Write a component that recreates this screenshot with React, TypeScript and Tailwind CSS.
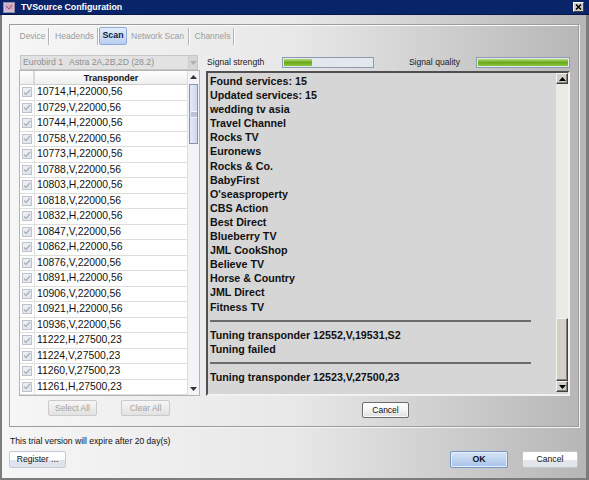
import React from 'react';

const transponders = [
  '10714,H,22000,56',
  '10729,V,22000,56',
  '10744,H,22000,56',
  '10758,V,22000,56',
  '10773,H,22000,56',
  '10788,V,22000,56',
  '10803,H,22000,56',
  '10818,V,22000,56',
  '10832,H,22000,56',
  '10847,V,22000,56',
  '10862,H,22000,56',
  '10876,V,22000,56',
  '10891,H,22000,56',
  '10906,V,22000,56',
  '10921,H,22000,56',
  '10936,V,22000,56',
  '11222,H,27500,23',
  '11224,V,27500,23',
  '11260,V,27500,23',
  '11261,H,27500,23',
];

type LogLine = { text?: string; rule?: boolean };

const log: LogLine[] = [
  { text: 'Found services: 15' },
  { text: 'Updated services: 15' },
  { text: 'wedding tv asia' },
  { text: 'Travel Channel' },
  { text: 'Rocks TV' },
  { text: 'Euronews' },
  { text: 'Rocks & Co.' },
  { text: 'BabyFirst' },
  { text: "O'seasproperty" },
  { text: 'CBS Action' },
  { text: 'Best Direct' },
  { text: 'Blueberry TV' },
  { text: 'JML CookShop' },
  { text: 'Believe TV' },
  { text: 'Horse & Country' },
  { text: 'JML Direct' },
  { text: 'Fitness TV' },
  { rule: true },
  { text: 'Tuning transponder 12552,V,19531,S2' },
  { text: 'Tuning failed' },
  { rule: true },
  { text: 'Tuning transponder 12523,V,27500,23' },
];

const tabs = [
  { label: 'Device', width: 'w-[31px]' },
  { label: 'Headends', width: 'w-[45px]' },
  { label: 'Scan', width: 'w-[28px]', active: true },
  { label: 'Network Scan', width: 'w-[61px]' },
  { label: 'Channels', width: 'w-[41px]' },
];

const Arrow: React.FC<{ down?: boolean; color?: string }> = ({ down, color = '#000' }) => (
  <svg width="7" height="4" viewBox="0 0 7 4">
    <path d={down ? 'M0 0 L7 0 L3.5 4Z' : 'M0 4 L3.5 0 L7 4Z'} fill={color} />
  </svg>
);

const CheckBox: React.FC = () => (
  <div className="w-[10px] h-[10px] border border-[#bcc3cd] bg-gradient-to-br from-[#f0f2f5] to-[#e0e4ea] flex items-center justify-center">
    <svg width="8" height="7" viewBox="0 0 8 7">
      <path d="M1 3.5 L3 5.5 L7 1" stroke="#a9b1bc" strokeWidth="1.3" fill="none" />
    </svg>
  </div>
);

const SignalBar: React.FC<{ width: string; fill: number }> = ({ width, fill }) => (
  <div className={`${width} h-[11px] border border-[#8d9bb0] bg-[#e3e8ef] p-[1px]`}>
    <div
      className="h-full bg-gradient-to-b from-[#b4e070] via-[#6aa81c] to-[#8cc83c]"
      style={{ width: `${fill}%` }}
    />
  </div>
);

const ClassicScrollButton: React.FC<{ down?: boolean }> = ({ down }) => (
  <div className="h-[11px] bg-[#d4d0c8] border border-t-[#f4f4f4] border-l-[#f4f4f4] border-r-[#404040] border-b-[#404040] shadow-[inset_-1px_-1px_0_#808080] flex items-center justify-center">
    <Arrow down={down} />
  </div>
);

function TitleBar() {
  return (
    <div className="h-[15px] bg-[#0a246a] flex items-center pl-[3px] pr-[3px] border-b border-[#06184a]">
      <svg width="12" height="11" viewBox="0 0 12 11" className="mr-[6px]">
        <rect x="0.5" y="0.5" width="11" height="10" fill="#c9c4d9" stroke="#8a8aa8" />
        <rect x="2" y="2" width="8" height="6" fill="#e8a0b8" />
        <path d="M3 4 L6 7 L9 3" stroke="#5a6aa8" strokeWidth="1" fill="none" />
      </svg>
      <span className="text-white font-bold text-[8.8px] leading-none">TVSource Configuration</span>
      <div className="ml-auto mr-[2px] w-[11px] h-[10px] bg-[#d4d0c8] border border-t-white border-l-white border-r-[#404040] border-b-[#404040] flex items-center justify-center">
        <svg width="7" height="6" viewBox="0 0 7 6">
          <path d="M1 0.5 L6 5.5 M6 0.5 L1 5.5" stroke="#000" strokeWidth="1.5" />
        </svg>
      </div>
    </div>
  );
}

function TabStrip() {
  return (
    <div className="ml-[7px] mt-[2px] h-[18px] flex items-center">
      {tabs.map((tab, i) => {
        const nextActive = tabs[i + 1]?.active;
        return (
          <React.Fragment key={tab.label}>
            {tab.active ? (
              <div className={`${tab.width} h-[18px] flex items-center justify-center border border-[#8faad6] rounded-[2px] bg-gradient-to-b from-[#e2ecfa] to-[#b9cff0] text-[8.8px] font-bold text-[#0c1c48]`}>
                {tab.label}
              </div>
            ) : (
              <div className={`${tab.width} h-[18px] flex items-center justify-center text-[8.5px] text-[#9c9c9c]`}>
                {tab.label}
              </div>
            )}
            {!tab.active && (
              <div className={`w-[2px] h-[17px] border-l border-[#b4b4b4] border-r border-r-white ${nextActive ? '' : 'mr-[2px]'}`} />
            )}
          </React.Fragment>
        );
      })}
    </div>
  );
}

function TransponderList() {
  return (
    <div className="w-[181px] flex flex-col">
      {/* Satellite combo */}
      <div className="ml-[1px] w-[178px] h-[15px] bg-[#e2e2e2] border border-[#c6c6c6] flex items-center pl-[2px] text-[8.7px] text-[#8e8e8e]">
        <span>Eurobird 1</span>
        <span className="ml-[6px]">Astra 2A,2B,2D (28.2)</span>
        <div className="ml-auto w-[9px] h-full bg-[#d6d6d6] border-l border-[#cfcfcf] flex items-center justify-center">
          <Arrow down color="#b0b0b0" />
        </div>
      </div>

      {/* Table */}
      <div className="h-[326px] flex border border-[#b4b4b4] bg-white">
        <div className="flex-1 flex flex-col">
          <div className="h-[14px] flex border-b border-[#cfcfcf] bg-gradient-to-b from-white to-[#eeeeee]">
            <div className="w-[15px] border-r-[2px] border-[#d8d8d8]" />
            <div className="flex-1 text-center font-bold text-[9px] leading-[14px] text-[#111]">Transponder</div>
          </div>
          {transponders.map(t => (
            <div key={t} className="h-[15.5px] flex border-b border-[#dedede]">
              <div className="w-[15px] flex items-center justify-center border-r border-[#e4e4e4]">
                <CheckBox />
              </div>
              <div className="flex-1 pl-[2px] flex items-center text-[10.4px] text-[#111]">{t}</div>
            </div>
          ))}
        </div>
        {/* Scrollbar */}
        <div className="w-[12px] flex flex-col bg-[#f3f4f8] border-l border-[#dadde6]">
          <div className="h-[12px] flex items-center justify-center">
            <Arrow color="#333" />
          </div>
          <div className="mt-[1px] h-[60px] mx-[1px] border border-[#8694b4] bg-gradient-to-r from-[#e4e9f7] to-[#cfd7ee] flex items-center justify-center">
            <div className="w-[6px] h-[7px] bg-[#b9c2da] border-y border-[#f4f6fb]" />
          </div>
          <div className="flex-1" />
          <div className="h-[12px] flex items-center justify-center">
            <Arrow down color="#333" />
          </div>
        </div>
      </div>

      {/* Buttons */}
      <div className="mt-[4px] flex pl-[29px] gap-[24px]">
        {['Select All', 'Clear All'].map(b => (
          <div
            key={b}
            className="w-[49px] h-[16px] rounded-[2px] border border-[#cacaca] bg-gradient-to-b from-[#f6f6f6] to-[#e2e2e2] flex items-center justify-center text-[8.5px] text-[#a2a2a2]"
          >
            {b}
          </div>
        ))}
      </div>
    </div>
  );
}

function ScanPanel() {
  return (
    <div className="w-[364px] flex flex-col">
      <div className="h-[15px] flex items-center pl-[1px] text-[8.6px] text-[#222]">
        <span className="w-[75px]">Signal strength</span>
        <SignalBar width="w-[92px]" fill={32} />
        <span className="flex-1 text-right pr-[16px]">Signal quality</span>
        <SignalBar width="w-[94px]" fill={100} />
      </div>

      <div className="mt-[1px] h-[325px] flex bg-[#d6d6d6] border-2 border-t-[#505050] border-l-[#505050] border-r-[#f2f2f2] border-b-[#f2f2f2]">
        <div className="flex-1 pl-[2px] pt-[1px] font-bold text-[10.7px] leading-[14.1px] text-[#111] overflow-hidden">
          {log.map((line, i) =>
            line.rule ? (
              <div key={i} className="h-[14.1px] flex items-center">
                <div className="w-[321px] h-[2px] bg-[#6c6c6c]" />
              </div>
            ) : (
              <div key={i} className="h-[14.1px] whitespace-nowrap">{line.text}</div>
            )
          )}
        </div>
        <div className="w-[12px] flex flex-col bg-[#ebeae5] mb-[2px]">
          <ClassicScrollButton />
          <div className="flex-1" />
          <div className="h-[63px] bg-[#d4d0c8] border border-t-[#f4f4f4] border-l-[#f4f4f4] border-r-[#404040] border-b-[#404040] shadow-[inset_-1px_-1px_0_#808080]" />
          <ClassicScrollButton down />
        </div>
      </div>

      <div className="mt-[6px] flex justify-center pr-[5px]">
        <div className="w-[47px] h-[16px] border border-[#6e6e6e] rounded-[2px] bg-gradient-to-b from-white via-[#f4f4f4] to-[#dedede] shadow-[inset_0_0_0_1px_#fafafa] flex items-center justify-center text-[8.5px] text-[#111]">
          Cancel
        </div>
      </div>
    </div>
  );
}

export default function App() {
  return (
    <div className="w-[589px] h-[480px] flex flex-col overflow-hidden font-['Liberation_Sans',Arial,sans-serif] select-none">
      <TitleBar />
      <div className="flex-1 flex flex-col border-l-[2px] border-r-[3px] border-b-[2px] border-[#7c7c7c] bg-gradient-to-r from-[#f6f6f6] via-[#e8e8e8] to-[#b6b6b6]">
        {/* Group box */}
        <div className="ml-[7px] mt-[9px] w-[570px] h-[403px] border border-[#9c9c9c] shadow-[inset_1px_1px_0_#fafafa,1px_1px_0_#f4f4f4] flex flex-col">
          <TabStrip />
          <div className="mt-[10px] pl-[9px] flex gap-[6px]">
            <TransponderList />
            <ScanPanel />
          </div>
        </div>

        <div className="mt-[9px] pl-[8px] h-[10px] flex items-center text-[8.6px] text-[#111]">
          This trial version will expire after 20 day(s)
        </div>

        <div className="mt-[5px] pl-[7px] pr-[8px] flex items-center">
          <div className="w-[57px] h-[17px] rounded-[2px] border border-[#c3cad4] bg-gradient-to-b from-white from-50% to-[#dfe4ec] to-50% flex items-center justify-center text-[8.6px] text-[#111]">
            Register ...
          </div>
          <div className="ml-auto w-[58px] h-[17px] rounded-[2px] border border-[#7896c4] bg-gradient-to-b from-[#d6e4f8] via-[#c0d4f0] to-[#a8c2ea] shadow-[inset_0_0_0_1px_#e4eefc] flex items-center justify-center text-[8.8px] font-bold text-[#111]">
            OK
          </div>
          <div className="ml-[14px] w-[56px] h-[17px] rounded-[2px] border border-[#c3c6cc] bg-gradient-to-b from-white from-50% to-[#e2e5ea] to-50% flex items-center justify-center text-[8.6px] text-[#111]">
            Cancel
          </div>
        </div>
      </div>
    </div>
  );
}
